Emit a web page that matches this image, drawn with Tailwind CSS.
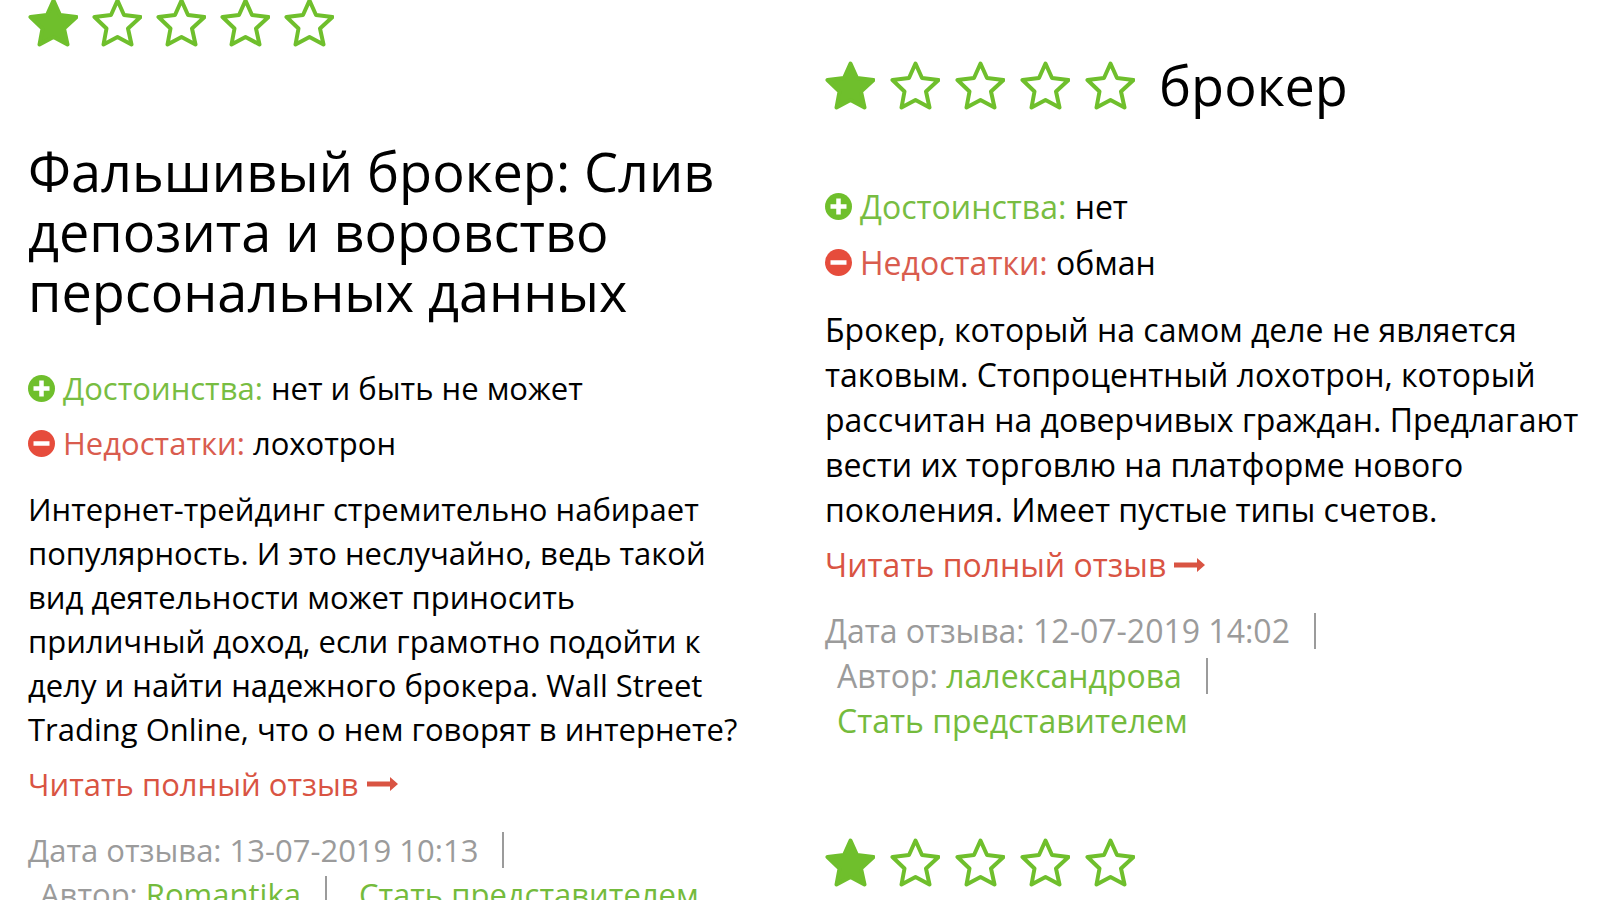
<!DOCTYPE html>
<html lang="ru">
<head>
    <meta charset="UTF-8">
    <meta name="viewport" content="width=device-width, initial-scale=1.0">
    <title>Отзывы о брокере</title>
    <script src="https://cdn.jsdelivr.net/npm/@tailwindcss/browser@4"></script>
</head>
<body class="bg-white text-black font-['Open_Sans','Noto_Sans',sans-serif] overflow-x-hidden [scrollbar-width:none]">
    <!-- Shared icons -->
    <svg class="hidden">
        <symbol id="star" viewBox="0 0 50 49">
            <path d="M25.500 2.500 L32 17 L48.500 19 L36 30.500 L39.500 46.500 L25.500 39 L11.500 46.500 L14.500 30.500 L2.500 19 L19 17 Z" stroke="currentColor" stroke-width="4" stroke-linejoin="round"/>
        </symbol>
        <symbol id="plus" viewBox="0 0 27 27">
            <circle cx="13.500" cy="13.500" r="13.500" fill="currentColor"/>
            <path d="M13.500 5.500v16M5.500 13.500h16" stroke="#fff" stroke-width="4.500"/>
        </symbol>
        <symbol id="minus" viewBox="0 0 27 27">
            <circle cx="13.500" cy="13.500" r="13.500" fill="currentColor"/>
            <path d="M5.500 13.500h16" stroke="#fff" stroke-width="4.500"/>
        </symbol>
        <symbol id="arrow" viewBox="0 0 31 14">
            <path d="M0 4.500h23V0l8 7-8 7V9.500H0z" fill="currentColor"/>
        </symbol>
    </svg>

    <main class="grid grid-cols-2">
        <!-- Left column -->
        <div class="pl-7 text-[31px] leading-[44px]">
            <article>
                <div class="flex gap-3.5 -mt-0.5 text-[#6fbf2c]" role="img" aria-label="Оценка 1 из 5">
                    <svg class="w-[50px] h-[49px]" fill="currentColor"><use href="#star"/></svg>
                    <svg class="w-[50px] h-[49px]" fill="none"><use href="#star"/></svg>
                    <svg class="w-[50px] h-[49px]" fill="none"><use href="#star"/></svg>
                    <svg class="w-[50px] h-[49px]" fill="none"><use href="#star"/></svg>
                    <svg class="w-[50px] h-[49px]" fill="none"><use href="#star"/></svg>
                </div>
                <h2 class="mt-[94px] max-w-[720px] text-[54px] leading-[60px]">Фальшивый брокер: Слив депозита и воровство персональных данных</h2>

                <div class="mt-[45px] flex items-center gap-2">
                    <svg class="w-[27px] h-[27px] text-[#6fbf2c]"><use href="#plus"/></svg>
                    <p><span class="text-[#78bd42]">Достоинства:</span> нет и быть не может</p>
                </div>
                <div class="mt-[11px] flex items-center gap-2">
                    <svg class="w-[27px] h-[27px] text-[#e64c3c]"><use href="#minus"/></svg>
                    <p><span class="text-[#d95c4e]">Недостатки:</span> лохотрон</p>
                </div>

                <p class="mt-[22px] max-w-[730px]">Интернет-трейдинг стремительно набирает популярность. И это неслучайно, ведь такой вид деятельности может приносить приличный доход, если грамотно подойти к делу и найти надежного брокера. Wall Street Trading Online, что о нем говорят в интернете?</p>
                <a href="#" class="mt-[11px] flex items-center gap-2 text-[#d95443]">Читать полный отзыв
                    <svg class="w-[31px] h-3.5"><use href="#arrow"/></svg>
                </a>

                <ul class="mt-[22px] flex flex-wrap gap-x-5 text-[#9b9b9b]">
                    <li class="flex items-center gap-6">Дата отзыва: 13-07-2019 10:13 <span class="w-0.5 h-9 bg-[#9b9b9b]"></span></li>
                    <li class="ml-3 flex items-center gap-6"><span>Автор: <a href="#" class="text-[#74bb3c]">Romantika</a></span> <span class="w-0.5 h-9 bg-[#9b9b9b]"></span></li>
                    <li class="ml-3"><a href="#" class="text-[#74bb3c]">Стать представителем</a></li>
                </ul>
            </article>
        </div>

        <!-- Right column -->
        <div class="pl-[25px] text-[32px] leading-[45px]">
            <article class="pt-[60px]">
                <div class="flex items-center gap-6">
                    <div class="flex gap-[15px] text-[#6fbf2c]" role="img" aria-label="Оценка 1 из 5">
                        <svg class="w-[50px] h-[49px]" fill="currentColor"><use href="#star"/></svg>
                        <svg class="w-[50px] h-[49px]" fill="none"><use href="#star"/></svg>
                        <svg class="w-[50px] h-[49px]" fill="none"><use href="#star"/></svg>
                        <svg class="w-[50px] h-[49px]" fill="none"><use href="#star"/></svg>
                        <svg class="w-[50px] h-[49px]" fill="none"><use href="#star"/></svg>
                    </div>
                    <h2 class="text-[54px] leading-[50px]">брокер</h2>
                </div>

                <div class="mt-[74px] flex items-center gap-2">
                    <svg class="w-[27px] h-[27px] text-[#6fbf2c]"><use href="#plus"/></svg>
                    <p><span class="text-[#78bd42]">Достоинства:</span> нет</p>
                </div>
                <div class="mt-[11px] flex items-center gap-2">
                    <svg class="w-[27px] h-[27px] text-[#e64c3c]"><use href="#minus"/></svg>
                    <p><span class="text-[#d95c4e]">Недостатки:</span> обман</p>
                </div>

                <p class="mt-[22px]">Брокер, который на самом деле не является таковым. Стопроцентный лохотрон, который рассчитан на доверчивых граждан. Предлагают вести их торговлю на платформе нового поколения. Имеет пустые типы счетов.</p>
                <a href="#" class="mt-[10px] flex items-center gap-2 text-[#d95443]">Читать полный отзыв
                    <svg class="w-[31px] h-3.5"><use href="#arrow"/></svg>
                </a>

                <ul class="mt-[21px] flex max-w-[560px] flex-wrap gap-x-5 text-[#9b9b9b]">
                    <li class="flex items-center gap-6">Дата отзыва: 12-07-2019 14:02 <span class="w-0.5 h-9 bg-[#9b9b9b]"></span></li>
                    <li class="ml-3 flex items-center gap-6"><span>Автор: <a href="#" class="text-[#74bb3c]">лалександрова</a></span> <span class="w-0.5 h-9 bg-[#9b9b9b]"></span></li>
                    <li class="ml-3"><a href="#" class="text-[#74bb3c]">Стать представителем</a></li>
                </ul>
            </article>

            <article class="mt-[95px]">
                <div class="flex gap-[15px] text-[#6fbf2c]" role="img" aria-label="Оценка 1 из 5">
                    <svg class="w-[50px] h-[49px]" fill="currentColor"><use href="#star"/></svg>
                    <svg class="w-[50px] h-[49px]" fill="none"><use href="#star"/></svg>
                    <svg class="w-[50px] h-[49px]" fill="none"><use href="#star"/></svg>
                    <svg class="w-[50px] h-[49px]" fill="none"><use href="#star"/></svg>
                    <svg class="w-[50px] h-[49px]" fill="none"><use href="#star"/></svg>
                </div>
            </article>
        </div>
    </main>
</body>
</html>
